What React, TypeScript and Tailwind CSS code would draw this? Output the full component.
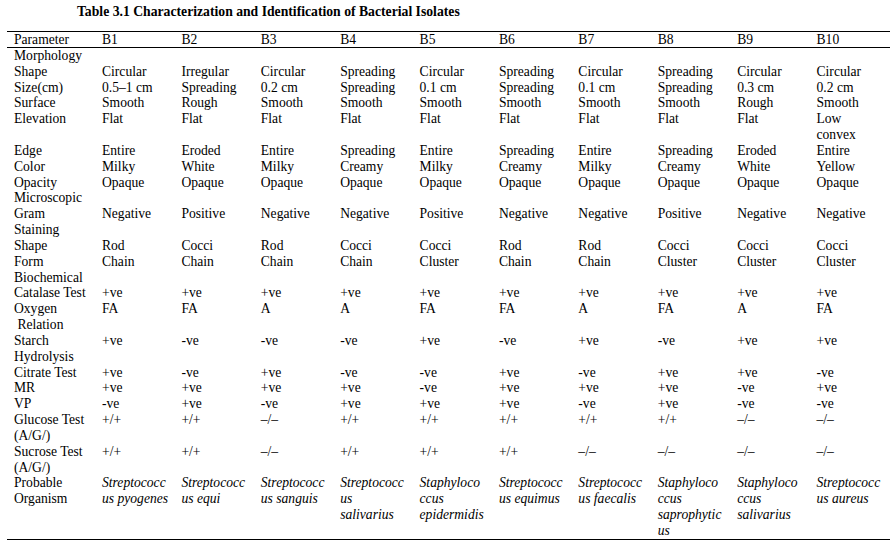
import React from "react";

type Row = { p: string; v?: string[]; italic?: boolean };

const rows: Row[] = [
  { p: "Morphology" },
  { p: "Shape", v: ["Circular", "Irregular", "Circular", "Spreading", "Circular", "Spreading", "Circular", "Spreading", "Circular", "Circular"] },
  { p: "Size(cm)", v: ["0.5–1 cm", "Spreading", "0.2 cm", "Spreading", "0.1 cm", "Spreading", "0.1 cm", "Spreading", "0.3 cm", "0.2 cm"] },
  { p: "Surface", v: ["Smooth", "Rough", "Smooth", "Smooth", "Smooth", "Smooth", "Smooth", "Smooth", "Rough", "Smooth"] },
  { p: "Elevation", v: ["Flat", "Flat", "Flat", "Flat", "Flat", "Flat", "Flat", "Flat", "Flat", "Low\nconvex"] },
  { p: "Edge", v: ["Entire", "Eroded", "Entire", "Spreading", "Entire", "Spreading", "Entire", "Spreading", "Eroded", "Entire"] },
  { p: "Color", v: ["Milky", "White", "Milky", "Creamy", "Milky", "Creamy", "Milky", "Creamy", "White", "Yellow"] },
  { p: "Opacity", v: ["Opaque", "Opaque", "Opaque", "Opaque", "Opaque", "Opaque", "Opaque", "Opaque", "Opaque", "Opaque"] },
  { p: "Microscopic" },
  { p: "Gram\nStaining", v: ["Negative", "Positive", "Negative", "Negative", "Positive", "Negative", "Negative", "Positive", "Negative", "Negative"] },
  { p: "Shape", v: ["Rod", "Cocci", "Rod", "Cocci", "Cocci", "Rod", "Rod", "Cocci", "Cocci", "Cocci"] },
  { p: "Form", v: ["Chain", "Chain", "Chain", "Chain", "Cluster", "Chain", "Chain", "Cluster", "Cluster", "Cluster"] },
  { p: "Biochemical" },
  { p: "Catalase Test", v: ["+ve", "+ve", "+ve", "+ve", "+ve", "+ve", "+ve", "+ve", "+ve", "+ve"] },
  { p: "Oxygen\n Relation", v: ["FA", "FA", "A", "A", "FA", "FA", "A", "FA", "A", "FA"] },
  { p: "Starch\nHydrolysis", v: ["+ve", "-ve", "-ve", "-ve", "+ve", "-ve", "+ve", "-ve", "+ve", "+ve"] },
  { p: "Citrate Test", v: ["+ve", "-ve", "+ve", "-ve", "-ve", "+ve", "-ve", "+ve", "+ve", "-ve"] },
  { p: "MR", v: ["+ve", "+ve", "+ve", "+ve", "-ve", "+ve", "+ve", "+ve", "-ve", "+ve"] },
  { p: "VP", v: ["-ve", "+ve", "-ve", "+ve", "+ve", "+ve", "-ve", "+ve", "-ve", "-ve"] },
  { p: "Glucose Test\n(A/G/)", v: ["+/+", "+/+", "–/–", "+/+", "+/+", "+/+", "+/+", "+/+", "–/–", "–/–"] },
  { p: "Sucrose Test\n(A/G/)", v: ["+/+", "+/+", "–/–", "+/+", "+/+", "+/+", "–/–", "–/–", "–/–", "–/–"] },
  {
    p: "Probable\nOrganism",
    italic: true,
    v: [
      "Streptococc\nus pyogenes",
      "Streptococc\nus equi",
      "Streptococc\nus sanguis",
      "Streptococc\nus\nsalivarius",
      "Staphyloco\nccus\nepidermidis",
      "Streptococc\nus equimus",
      "Streptococc\nus faecalis",
      "Staphyloco\nccus\nsaprophytic\nus",
      "Staphyloco\nccus\nsalivarius",
      "Streptococc\nus aureus",
    ],
  },
];

const headers = ["B1", "B2", "B3", "B4", "B5", "B6", "B7", "B8", "B9", "B10"];

export default function App() {
  return (
    <div className="w-[896px] h-[555px] bg-white text-black font-['Liberation_Serif',serif] overflow-hidden">
      <div className="h-[31px] pt-[4px] pl-[77px] text-[13.7px] leading-[16px] font-bold whitespace-pre">
        Table 3.1 Characterization and Identification of Bacterial Isolates
      </div>
      <div className="ml-[7px] w-[883px] text-[13.6px] leading-[15.83px]">
        <div className="grid grid-cols-[89px_repeat(10,79.4px)] h-[17px] border-t border-b border-black items-center">
          <div className="pl-[7px] whitespace-pre">Parameter</div>
          {headers.map((h) => (
            <div key={h} className="pl-[6px] whitespace-pre">
              {h}
            </div>
          ))}
        </div>
        <div className="grid grid-cols-[89px_repeat(10,79.4px)] border-b border-black">
          {rows.map((r, i) => (
            <React.Fragment key={i}>
              <div className="pl-[7px] whitespace-pre">{r.p}</div>
              {(r.v ?? Array(10).fill("")).map((v, j) => (
                <div key={j} className={`pl-[6px] whitespace-pre ${r.italic ? "italic" : ""}`}>
                  {v}
                </div>
              ))}
            </React.Fragment>
          ))}
        </div>
      </div>
    </div>
  );
}
